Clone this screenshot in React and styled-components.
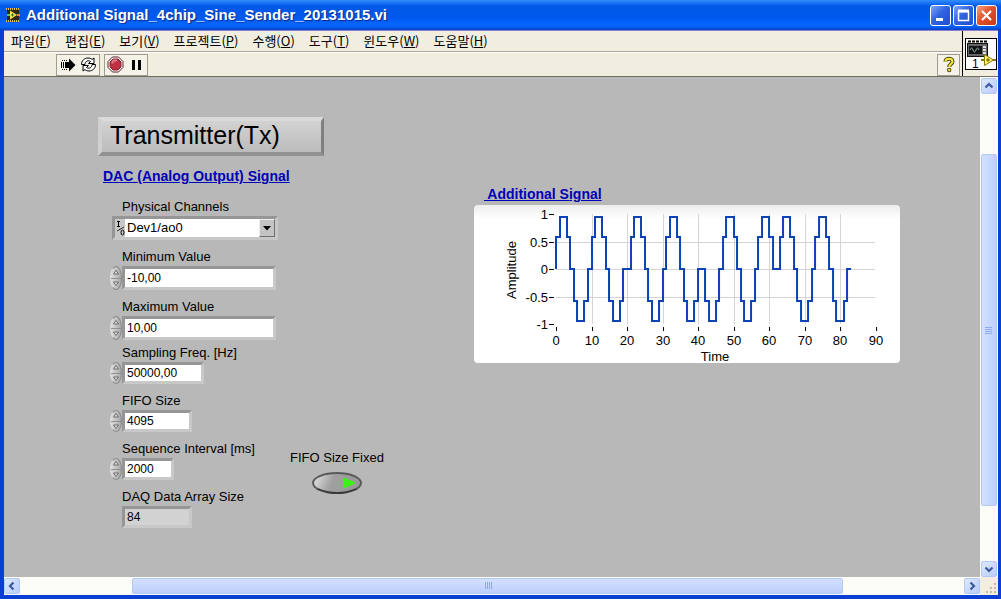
import React, { useState } from 'react';
import styled, { createGlobalStyle, css } from 'styled-components';

const GlobalStyle = createGlobalStyle`
  *, *::before, *::after { box-sizing: border-box; }
  body {
    margin: 0;
    color: #000;
    font-family: "Liberation Sans", "Noto Sans CJK KR", sans-serif;
    font-size: 13px;
    line-height: 18px;
  }
  button, input, select { font: inherit; color: inherit; margin: 0; padding: 0; }
  svg { display: block; }
`;

const Window = styled.div`
  min-height: 100vh;
  display: flex;
  flex-direction: column;
  background: #ece9d8;
  border: solid #0a3fd6;
  border-width: 0 3px 4px 4px;
`;

/* ---------- title bar ---------- */

const TitleBar = styled.header`
  height: 30px;
  margin: 0 -3px 0 -4px;
  padding: 0 4px 0 6px;
  display: flex;
  align-items: center;
  gap: 6px;
  background: linear-gradient(#2f8dfb 0, #1b74f4 3px, #0058e6 6px, #0059ee 18px, #0566fd 24px, #0560f4 27px, #0a3fc0 30px);
`;

const WindowTitle = styled.h1`
  margin: 0;
  flex: 1;
  min-width: 0;
  overflow: hidden;
  white-space: nowrap;
  color: #fff;
  font-size: 15px;
  line-height: 20px;
  font-weight: 700;
  text-shadow: 1px 1px 1px #0a2a8c;
`;

const CaptionButtons = styled.div`
  display: flex;
  gap: 2px;
`;

const CaptionButton = styled.button`
  width: 21px;
  height: 21px;
  display: grid;
  place-items: center;
  border: 1px solid #fff;
  border-radius: 3px;
  background: ${(p) =>
    p.$danger
      ? 'linear-gradient(135deg, #f0a184, #e2532c 45%, #c93a14)'
      : 'linear-gradient(135deg, #7fa6f5, #2f63e0 45%, #1c4fcc)'};
`;

/* ---------- menu and tool bars ---------- */

const Bars = styled.div`
  display: flex;
  border-top: 1px solid #8a7fd0;
  border-bottom: 1px solid #6f6c62;
  background: #f1eee0;
`;

const BarStack = styled.div`
  flex: 1;
  min-width: 0;
`;

const MenuBar = styled.nav`
  height: 21px;
  padding-left: 7px;
  display: flex;
  align-items: center;
  gap: 14px;
  border-bottom: 1px solid #aca899;
`;

const MenuItem = styled.button`
  border: 0;
  background: none;
  white-space: nowrap;
  font-family: "Noto Sans CJK KR", sans-serif;
  font-size: 13px;
  line-height: 18px;
`;

const ToolBar = styled.div`
  height: 24px;
  padding: 0 2px 0 52px;
  display: flex;
  align-items: center;
  gap: 4px;
  border-top: 1px solid #fff;
`;

const ToolGroup = styled.div`
  display: flex;
  border: 1px solid #a09d90;
  & > * + * { border-left: 1px solid #a09d90; }
`;

const ToolButton = styled.button`
  width: 21px;
  height: 20px;
  display: grid;
  place-items: center;
  border: 0;
  background: #f5f3e8;
`;

const Spacer = styled.div`
  flex: 1;
`;

const ConnectorPane = styled.div`
  width: 36px;
  display: grid;
  place-items: center;
  border-left: 1px solid #000;
  background: #f1eee0;
`;

/* ---------- work area ---------- */

const WorkArea = styled.div`
  flex: 1;
  display: flex;
`;

const FrontPanel = styled.main`
  flex: 1;
  min-width: 0;
  padding: 40px 80px 40px 94px;
  display: flex;
  align-items: flex-start;
  gap: 90px;
  background: #b8b8b8;
`;

const Transmitter = styled.section`
  flex: none;
`;

const Banner = styled.h2`
  width: 226px;
  height: 39px;
  margin: 0;
  padding: 0 8px 4px;
  display: flex;
  align-items: center;
  font-size: 25px;
  line-height: 28px;
  font-weight: 400;
  background: linear-gradient(#d2d2d2, #bcbcbc);
  border: solid;
  border-width: 4px 3px 4px 4px;
  border-color: #dadada #808080 #929292 #d0d0d0;
`;

const SectionTitle = styled.h3`
  margin: 0;
  font-size: 14px;
  line-height: 18px;
  font-weight: 700;
  color: #0000b8;
  text-decoration: underline;
  white-space: pre;
`;

const DacTitle = styled.div`
  padding: 11px 0 0 5px;
`;

const DacBody = styled.div`
  padding: 13px 0 0 12px;
  display: flex;
  align-items: flex-end;
  gap: 12px;
`;

const FieldColumn = styled.div`
  width: 168px;
  display: flex;
  flex-direction: column;
  gap: 4px;
`;

const FieldGroup = styled.div`
  display: flex;
  flex-direction: column;
  gap: 8px;
`;

const Field = styled.div`
  display: flex;
  flex-direction: column;
`;

const FieldLabel = styled.label`
  padding-left: 12px;
  line-height: 18px;
  white-space: nowrap;
`;

const FieldRow = styled.div`
  height: ${(p) => (p.$tall ? 24 : 22)}px;
  display: flex;
  align-items: stretch;
`;

const SpinnerBox = styled.div`
  width: 12px;
  display: flex;
  flex-direction: column;
  border: 1px solid #8a8a8a;
  border-left-color: #dcdcdc;
  border-radius: 50%;
  overflow: hidden;
  background: linear-gradient(90deg, #dedede, #a8a8a8);
`;

const SpinButton = styled.button`
  flex: 1;
  display: grid;
  place-items: center;
  border: 0;
  background: none;
  & + & { border-top: 1px solid #909090; }
`;

const sunken = css`
  border: solid;
  border-width: 3px;
  border-color: #969696 #c8c8c8 #c8c8c8 #969696;
`;

const ValueInput = styled.input`
  ${sunken}
  width: ${(p) => p.$width}px;
  padding-left: 2px;
  font-size: 12px;
  border-radius: 0;
  background: ${(p) => (p.readOnly ? '#d2d2d2' : '#fff')};
  ${(p) => p.readOnly && 'margin-left: 12px;'}
`;

const ChannelBox = styled.div`
  ${sunken}
  flex: 1;
  margin-left: 2px;
  display: flex;
  align-items: stretch;
  background: #c8c8c8;
`;

const ChannelSelect = styled.select`
  flex: 1;
  min-width: 0;
  padding-left: 2px;
  appearance: none;
  border: 0;
  border-radius: 0;
  background: #fff;
`;

const DropMark = styled.span`
  width: 16px;
  display: grid;
  place-items: center;
  border: 1px solid #707070;
  border-top-color: #eee;
  border-left-color: #eee;
  background: #c4c4c4;
`;

const TypeMark = styled.span`
  width: 10px;
  display: grid;
  place-items: center;
`;

const SwitchField = styled.label`
  padding-bottom: 34px;
  display: flex;
  flex-direction: column;
  align-items: center;
  gap: 5px;
  white-space: nowrap;
`;

const OvalSwitch = styled.input`
  appearance: none;
  width: 50px;
  height: 22px;
  margin: 0;
  border: 2px solid #5a5a5a;
  border-bottom-color: #3a3a3a;
  border-radius: 50%;
  background:
    conic-gradient(from 245deg at 100% 50%, ${(p) => (p.checked ? '#3cf018' : '#4a6a44')} 50deg, transparent 0) 29px 4px / 13px 10px no-repeat,
    linear-gradient(115deg, #e4e4e4, #a0a0a0 40%, #969696);
`;

const SignalSection = styled.section`
  flex: 1;
  min-width: 0;
  padding-top: 68px;
`;

const SignalTitle = styled.div`
  padding-left: 10px;
`;

const GraphFrame = styled.div`
  margin-top: 2px;
  border-radius: 4px;
  overflow: hidden;
  background: linear-gradient(#ededed, #fff 14px);
`;

/* ---------- scroll bars ---------- */

const VerticalBar = styled.div`
  width: 18px;
  padding: 1px 1px 0;
  display: flex;
  flex-direction: column;
  background: #fdfdf8;
`;

const HorizontalBar = styled.div`
  height: 18px;
  display: flex;
  background: #fdfdf8;
`;

const HorizontalTrack = styled.div`
  flex: 1;
  padding: 1px 0;
  display: flex;
`;

const ScrollButton = styled.button`
  flex: none;
  width: 16px;
  height: 16px;
  display: grid;
  place-items: center;
  border: 1px solid #b4c8f4;
  border-radius: 2px;
  background: linear-gradient(135deg, #dce8ff, #b9cdfb);
`;

const Gap = styled.div`
  flex: ${(p) => p.$share} 0 0;
`;

const Thumb = styled.div`
  flex: ${(p) => p.$share} 0 0;
  display: flex;
  align-items: center;
  justify-content: center;
  border: 1px solid #b4c8f4;
  border-radius: 2px;
  background: linear-gradient(${(p) => (p.$vertical ? '90deg' : '180deg')}, #d3e0ff, #bdd0fb);
`;

const SizeGrip = styled.div`
  width: 18px;
  display: grid;
  place-items: end;
  background: #f1eee0;
`;

/* ---------- drawings ---------- */

const AppIcon = () => (
  <svg width="14" height="14" viewBox="0 0 14 14" aria-hidden="true">
    <rect x="1" y="1" width="12" height="12" fill="#2b2a18" />
    <path d="M0 1h14M0 13h14" stroke="#d9c46a" strokeWidth="2" strokeDasharray="1 1" />
    <path d="M4 2.500v9L11 7z" fill="#ffe24a" />
    <path d="M1 7h3" stroke="#5fc45a" strokeWidth="2" />
    <path d="M11 7h3" stroke="#ef8b2c" strokeWidth="2" />
    <path d="M5 7h3M6.500 5.500v3" stroke="#2b6a2a" />
  </svg>
);

const RunIcon = () => (
  <svg width="16" height="16" viewBox="0 0 16 16" aria-hidden="true">
    <path d="M9 1.500l6.500 6.500L9 14.500V11H5V5h4z" fill="#000" />
    <path d="M3.500 5v6M1.500 5v6" stroke="#000" />
    <path d="M2 3.500h6M2 12.500h6" stroke="#000" strokeDasharray="1 1" />
  </svg>
);

const LoopIcon = () => (
  <svg width="17" height="17" viewBox="0 0 17 17" fill="#fff" stroke="#000" strokeLinejoin="round" aria-hidden="true">
    <path d="M1.500 8.500C1.500 4.500 4.500 2 8 2c1.500 0 3 .5 4 1.500L14 2v5.500H8.500l2-2C8 3.800 4.800 5.500 5 8.500z" />
    <path d="M15.500 8.500c0 4-3 6.500-6.500 6.500-1.500 0-3-.5-4-1.500L3 15V9.500h5.500l-2 2c2.500 1.700 5.700 0 5.500-3z" />
  </svg>
);

const AbortIcon = () => (
  <svg width="17" height="17" viewBox="0 0 17 17" aria-hidden="true">
    <path d="M5.500 1h6L16 5.500v6L11.500 16h-6L1 11.500v-6z" fill="#fff" stroke="#5c1c20" />
    <path d="M6 3h5l3 3v5l-3 3H6l-3-3V6z" fill="#c03040" stroke="#8a2030" />
    <path d="M5.500 7.500V6l1.500-1.500h3" fill="none" stroke="#e0808a" strokeWidth="2" />
  </svg>
);

const PauseIcon = () => (
  <svg width="12" height="12" viewBox="0 0 12 12" aria-hidden="true">
    <path d="M1 1h3v10H1zM7 1h3v10H7z" fill="#000" />
  </svg>
);

const HelpIcon = () => (
  <svg width="14" height="17" viewBox="0 0 14 17" fill="none" aria-hidden="true">
    <path d="M3.500 5.500C3.500 1.800 10.500 1.800 10.500 5.500c0 2.500-3.300 2.500-3.300 5.500" stroke="#4a4410" strokeWidth="4" />
    <circle cx="7.200" cy="14" r="2.200" fill="#4a4410" />
    <path d="M3.500 5.500C3.500 1.800 10.500 1.800 10.500 5.500c0 2.500-3.300 2.500-3.300 5.500" stroke="#f8e840" strokeWidth="2" />
    <circle cx="7.200" cy="14" r="1.200" fill="#f8e840" />
  </svg>
);

const ViIcon = () => (
  <svg width="32" height="32" viewBox="0 0 32 32" aria-label="VI">
    <rect x=".5" y=".5" width="31" height="31" fill="#fff" stroke="#000" />
    <path d="M3 3.500h19" stroke="#000" strokeWidth="2" strokeDasharray="3 1" />
    <rect x="2.500" y="5.500" width="20" height="13" fill="#666" stroke="#111" />
    <rect x="4" y="8" width="13" height="8" fill="#101418" />
    <path d="M5 12q1.500-4 3 0t3 0 3 0" fill="none" stroke="#9ab0a0" />
    <path d="M18 9h3M18 12h3M18 15h3" stroke="#ddd" strokeWidth="2" />
    <text x="7" y="30" fontSize="12">1</text>
    <path d="M19.500 16.500v11l9-5.500z" fill="#fff36a" stroke="#8a7a10" />
    <path d="M21 22h4M23 20v4" stroke="#665a00" />
    <path d="M16 22h3M28 22h3" stroke="#8a7a10" strokeWidth="2" />
  </svg>
);

const Chevron = ({ turn = 0 }) => (
  <svg width="10" height="10" viewBox="0 0 10 10" aria-hidden="true">
    <path d="M1.500 6.500L5 3l3.500 3.500" transform={`rotate(${turn} 5 5)`} fill="none" stroke="#3f5a9c" strokeWidth="2.200" />
  </svg>
);

const GripLines = ({ vertical }) => (
  <svg width="8" height="8" viewBox="0 0 8 8" aria-hidden="true">
    <path
      d={vertical ? 'M0 1.500h7M0 3.500h7M0 5.500h7M0 7.500h7' : 'M1.500 0v7M3.500 0v7M5.500 0v7M7.500 0v7'}
      stroke="#8fabe8"
    />
  </svg>
);

const SpinArrow = ({ down }) => (
  <svg width="6" height="5" viewBox="0 0 6 5" aria-hidden="true">
    <path d={down ? 'M.5 1h5L3 4.500z' : 'M.5 4h5L3 .5z'} fill="#ddd" stroke="#555" strokeWidth=".8" />
  </svg>
);

/* ---------- graph ---------- */

const S = 0.59;
const P = 0.95;
// [value, number of samples]
const RUNS = [
  [S, 1], [P, 2], [S, 1], [0, 1], [-S, 1], [-P, 2], [-S, 1], [0, 1],
  [S, 1], [P, 2], [S, 1], [0, 1], [-S, 1], [-P, 2], [-S, 1], [0, 2],
  [S, 1], [P, 2], [S, 1], [0, 1], [-S, 1], [-P, 2], [-S, 1], [0, 1],
  [S, 1], [P, 2], [S, 1], [0, 1], [-S, 1], [-P, 2], [-S, 1], [0, 2],
  [-S, 1], [-P, 2], [-S, 1], [0, 1], [S, 1], [P, 2], [S, 1], [0, 1],
  [-S, 1], [-P, 2], [-S, 1], [0, 1], [S, 1], [P, 2], [S, 1], [0, 2],
  [S, 1], [P, 2], [S, 1], [0, 1], [-S, 1], [-P, 2], [-S, 1], [0, 1],
  [S, 1], [P, 2], [S, 1], [0, 1], [-S, 1], [-P, 2], [-S, 1], [0, 1],
];

const px = (t) => Math.round(82 + t * 3.55);
const py = (v) => Math.round(64 - v * 55);

const signalPath = () => {
  let t = 0;
  let d = `M${px(0)} ${py(0)}`;
  RUNS.forEach(([value, samples]) => {
    d += `V${py(value)}`;
    t += samples;
    d += `H${px(t)}`;
  });
  return d;
};

const GraphSvg = styled.svg`
  width: 100%;
  height: auto;
  font-size: 13px;
`;

const X_TICKS = [0, 10, 20, 30, 40, 50, 60, 70, 80, 90];
const Y_TICKS = [1, 0.5, 0, -0.5, -1];

const Graph = () => (
  <GraphSvg viewBox="0 0 426 158" role="img" aria-label="Amplitude over time">
    {X_TICKS.slice(1, 9).map((t) => (
      <path key={t} d={`M${px(t) + 0.5} 9V119`} stroke="#d4d4d4" />
    ))}
    {[0.5, 0, -0.5].map((v) => (
      <path key={v} d={`M82 ${py(v) + 0.5}H401`} stroke="#d4d4d4" />
    ))}
    {Y_TICKS.map((v) => (
      <g key={v}>
        <path d={`M75 ${py(v) + 0.5}h5`} stroke="#000" />
        <text x="74" y={py(v) + 5} textAnchor="end">{v}</text>
      </g>
    ))}
    {X_TICKS.map((t) => (
      <g key={t}>
        <path d={`M${px(t) + 0.5} 122v4`} stroke="#000" />
        <text x={px(t)} y="140" textAnchor="middle">{t}</text>
      </g>
    ))}
    <path d={signalPath()} fill="none" stroke="#0b42b4" strokeWidth="2" />
    <text x="241" y="156" textAnchor="middle">Time</text>
    <text transform="translate(42 65) rotate(-90)" textAnchor="middle">Amplitude</text>
  </GraphSvg>
);

/* ---------- composed parts ---------- */

const NumericField = ({ id, label, initial, width, tall }) => {
  const [value, setValue] = useState(initial);
  return (
    <Field>
      <FieldLabel htmlFor={id}>{label}</FieldLabel>
      <FieldRow $tall={tall}>
        <SpinnerBox>
          <SpinButton aria-label={`${label} +`}><SpinArrow /></SpinButton>
          <SpinButton aria-label={`${label} -`}><SpinArrow down /></SpinButton>
        </SpinnerBox>
        <ValueInput id={id} $width={width} value={value} onChange={(e) => setValue(e.target.value)} />
      </FieldRow>
    </Field>
  );
};

const MENUS = [
  ['파일', 'F'], ['편집', 'E'], ['보기', 'V'], ['프로젝트', 'P'],
  ['수행', 'O'], ['도구', 'T'], ['윈도우', 'W'], ['도움말', 'H'],
];

export default function App() {
  const [fixed, setFixed] = useState(true);
  return (
    <>
      <GlobalStyle />
      <Window>
        <TitleBar>
          <AppIcon />
          <WindowTitle>Additional Signal_4chip_Sine_Sender_20131015.vi</WindowTitle>
          <CaptionButtons>
            <CaptionButton aria-label="Minimize">
              <svg width="13" height="13"><path d="M2 10.500h7" stroke="#fff" strokeWidth="3" /></svg>
            </CaptionButton>
            <CaptionButton aria-label="Maximize">
              <svg width="13" height="13"><path d="M1.500 2v9.500h10V2M1 2.500h11" fill="none" stroke="#fff" strokeWidth="1.500" /><path d="M1 2h11" stroke="#fff" strokeWidth="3" /></svg>
            </CaptionButton>
            <CaptionButton aria-label="Close" $danger>
              <svg width="13" height="13"><path d="M2 2l9 9M11 2l-9 9" stroke="#fff" strokeWidth="2.200" /></svg>
            </CaptionButton>
          </CaptionButtons>
        </TitleBar>

        <Bars>
          <BarStack>
            <MenuBar>
              {MENUS.map(([name, key]) => (
                <MenuItem key={key}>{name}(<u>{key}</u>)</MenuItem>
              ))}
            </MenuBar>
            <ToolBar>
              <ToolGroup>
                <ToolButton aria-label="Run"><RunIcon /></ToolButton>
                <ToolButton aria-label="Run continuously"><LoopIcon /></ToolButton>
              </ToolGroup>
              <ToolGroup>
                <ToolButton aria-label="Abort"><AbortIcon /></ToolButton>
                <ToolButton aria-label="Pause"><PauseIcon /></ToolButton>
              </ToolGroup>
              <Spacer />
              <ToolGroup>
                <ToolButton aria-label="Help"><HelpIcon /></ToolButton>
              </ToolGroup>
            </ToolBar>
          </BarStack>
          <ConnectorPane><ViIcon /></ConnectorPane>
        </Bars>

        <WorkArea>
          <FrontPanel>
            <Transmitter>
              <Banner>Transmitter(Tx)</Banner>
              <DacTitle>
                <SectionTitle>DAC (Analog Output) Signal</SectionTitle>
              </DacTitle>
              <DacBody>
                <FieldColumn>
                  <FieldGroup>
                    <Field>
                      <FieldLabel htmlFor="channel">Physical Channels</FieldLabel>
                      <FieldRow $tall>
                        <ChannelBox>
                          <TypeMark>
                            <svg width="9" height="16" viewBox="0 0 9 16" fill="none" stroke="#000" aria-hidden="true">
                              <path d="M1 1.500h3M2.500 1.500v5M1 6.500h3" />
                              <path d="M1 11l7-4" strokeWidth=".8" />
                              <ellipse cx="6.500" cy="12.500" rx="1.500" ry="2.500" />
                            </svg>
                          </TypeMark>
                          <ChannelSelect id="channel" defaultValue="Dev1/ao0">
                            <option>Dev1/ao0</option>
                          </ChannelSelect>
                          <DropMark>
                            <svg width="8" height="5" aria-hidden="true"><path d="M0 0h8L4 4.500z" /></svg>
                          </DropMark>
                        </ChannelBox>
                      </FieldRow>
                    </Field>
                    <NumericField id="min" label="Minimum Value" initial="-10,00" width={154} tall />
                    <NumericField id="max" label="Maximum Value" initial="10,00" width={154} tall />
                  </FieldGroup>
                  <FieldGroup>
                    <NumericField id="freq" label="Sampling Freq. [Hz]" initial="50000,00" width={82} />
                    <NumericField id="fifo" label="FIFO Size" initial="4095" width={70} />
                    <NumericField id="interval" label="Sequence Interval [ms]" initial="2000" width={52} />
                    <Field>
                      <FieldLabel htmlFor="array">DAQ Data Array Size</FieldLabel>
                      <FieldRow>
                        <ValueInput id="array" $width={70} value="84" readOnly />
                      </FieldRow>
                    </Field>
                  </FieldGroup>
                </FieldColumn>
                <SwitchField>
                  FIFO Size Fixed
                  <OvalSwitch type="checkbox" checked={fixed} onChange={(e) => setFixed(e.target.checked)} />
                </SwitchField>
              </DacBody>
            </Transmitter>

            <SignalSection>
              <SignalTitle>
                <SectionTitle> Additional Signal</SectionTitle>
              </SignalTitle>
              <GraphFrame><Graph /></GraphFrame>
            </SignalSection>
          </FrontPanel>
          <VerticalBar>
            <ScrollButton aria-label="Scroll up"><Chevron /></ScrollButton>
            <Gap $share={60} />
            <Thumb $share={352} $vertical><GripLines vertical /></Thumb>
            <Gap $share={55} />
            <ScrollButton aria-label="Scroll down"><Chevron turn={180} /></ScrollButton>
          </VerticalBar>
        </WorkArea>

        <HorizontalBar>
          <HorizontalTrack>
            <ScrollButton aria-label="Scroll left"><Chevron turn={-90} /></ScrollButton>
            <Gap $share={112} />
            <Thumb $share={710}><GripLines /></Thumb>
            <Gap $share={121} />
            <ScrollButton aria-label="Scroll right"><Chevron turn={90} /></ScrollButton>
          </HorizontalTrack>
          <SizeGrip>
            <svg width="13" height="13" fill="#c0bca4" aria-hidden="true">
              <path d="M9 1h2v2H9zM5 5h2v2H5zM9 5h2v2H9zM1 9h2v2H1zM5 9h2v2H5zM9 9h2v2H9z" />
            </svg>
          </SizeGrip>
        </HorizontalBar>
      </Window>
    </>
  );
}
